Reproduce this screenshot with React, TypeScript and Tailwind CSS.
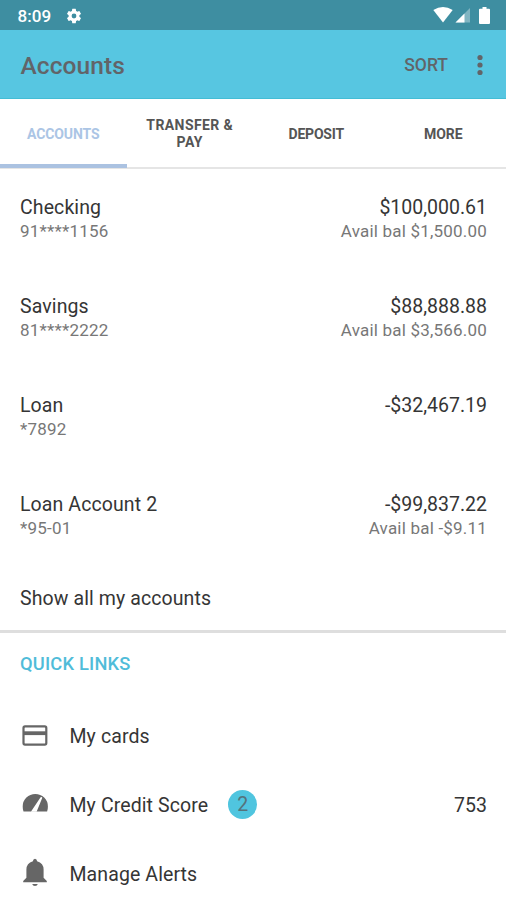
const accounts = [
  { name: "Checking", number: "91****1156", balance: "$100,000.61", available: "Avail bal $1,500.00" },
  { name: "Savings", number: "81****2222", balance: "$88,888.88", available: "Avail bal $3,566.00" },
  { name: "Loan", number: "*7892", balance: "-$32,467.19", available: "" },
  { name: "Loan Account 2", number: "*95-01", balance: "-$99,837.22", available: "Avail bal -$9.11" },
];

function StatusBar() {
  return (
    <div className="flex h-[30px] shrink-0 items-center bg-[#3e8ea1] pl-[17.500px] pr-[16px] text-white">
      <span className="text-[17px] leading-[30px] font-medium tracking-[0.1px] pt-[2px]">8:09</span>
      <svg className="ml-[14px] mt-[1px] size-[18px]" viewBox="0 0 24 24" fill="currentColor">
        <path d="M19.14 12.94c.04-.3.06-.61.06-.94s-.02-.64-.07-.94l2.03-1.58a.49.49 0 0 0 .12-.61l-1.92-3.32a.49.49 0 0 0-.59-.22l-2.39.96a7 7 0 0 0-1.62-.94l-.36-2.54A.48.48 0 0 0 13.920 2.400h-3.840a.47.47 0 0 0-.47.41l-.36 2.540a7.200 7.200 0 0 0-1.620.940l-2.390-.960a.48.48 0 0 0-.590.220L2.740 8.870a.47.47 0 0 0 .120.610l2.030 1.580c-.050.300-.090.630-.090.940s.020.640.070.940l-2.030 1.580a.49.49 0 0 0-.120.610l1.920 3.320c.120.220.370.290.590.220l2.390-.960c.500.380 1.030.700 1.620.940l.360 2.540c.050.240.240.410.480.410h3.840c.240 0 .440-.170.470-.410l.360-2.540a7 7 0 0 0 1.620-.940l2.390.960c.220.080.470 0 .590-.220l1.920-3.320a.47.47 0 0 0-.120-.610zM12 15.200a3.200 3.200 0 1 1 0-6.400 3.200 3.200 0 0 1 0 6.400z" />
      </svg>
      <svg className="ml-auto h-4 w-5" viewBox="0 0 20 16" fill="currentColor">
        <path d="M0.300 3Q10-3 19.700 3L10 15.500z" />
      </svg>
      <svg className="ml-[2px] h-4 w-4" viewBox="0 0 16 16" fill="currentColor">
        <path opacity=".35" d="M15 1v14.500H.500z" />
        <path d="M9.500 6.500v9H.500z" />
      </svg>
      <svg className="ml-2 h-[17px] w-[11px]" viewBox="0 0 11 17" fill="currentColor">
        <path d="M3.500 0h4v1.700H10q1 0 1 1V16q0 1-1 1H1q-1 0-1-1V2.700q0-1 1-1h2.500z" />
      </svg>
    </div>
  );
}

export default function App() {
  return (
    <main className="flex h-[900px] w-[506px] flex-col overflow-hidden bg-white font-['Roboto',sans-serif] text-[#353535]">
      <StatusBar />
      <header className="flex h-[69px] shrink-0 items-center border-b border-[#43bdd5] bg-[#57c6e1] pl-[20.500px] pr-[23px] text-[#626468]">
        <h1 className="text-[24.500px] leading-8 font-medium tracking-[0.1px] pt-[3px]">Accounts</h1>
        <span className="ml-auto text-[17.5px] font-medium leading-6 pt-[2px]">SORT</span>
        <svg className="ml-[29px] mt-[1px] h-[22px] w-[6px]" viewBox="0 0 6 22" fill="currentColor">
          <circle cx="3" cy="3.500" r="2.600" />
          <circle cx="3" cy="11" r="2.600" />
          <circle cx="3" cy="18.500" r="2.600" />
        </svg>
      </header>
      <nav className="grid h-[70px] shrink-0 grid-cols-4 border-b-2 border-[#e5e5e5] text-center text-[14px] leading-[17px] font-bold text-[#555]">
        <div className="-mb-[1px] flex items-center justify-center border-b-4 border-[#abc2e1] pt-[5px] tracking-[-0.1px] text-[#abc5e5]">ACCOUNTS</div>
        <div className="flex items-center justify-center px-4 pt-[2px] tracking-[0.400px]">TRANSFER & PAY</div>
        <div className="flex items-center justify-center pt-[2px] tracking-[-0.2px]">DEPOSIT</div>
        <div className="flex items-center justify-center pt-[2px] pl-px tracking-[-0.1px]">MORE</div>
      </nav>

      <section className="flex shrink-0 flex-col pt-[26px] pl-5 pr-[19px]">
        {accounts.map((a) => (
          <div key={a.number} className="flex h-[99px] justify-between">
            <div>
              <div className="text-[19.500px] leading-[26px] tracking-[0.1px]">{a.name}</div>
              <div className="-mt-[2px] text-[17px] leading-6 tracking-[0.2px] text-[#777]">{a.number}</div>
            </div>
            <div className="text-right">
              <div className="text-[19.500px] leading-[26px]">{a.balance}</div>
              <div className="-mt-[2px] text-[17px] leading-6 tracking-[0.2px] text-[#777]">{a.available}</div>
            </div>
          </div>
        ))}
        <div className="-mt-[5px] h-[44px] text-[19.500px] leading-[26px] tracking-[0.1px]">Show all my accounts</div>
      </section>

      <section className="shrink-0 border-t-[3px] border-[#dedede] pl-5 pr-[19px]">
        <h2 className="h-[68px] pt-[18px] text-[18.300px] leading-[26px] tracking-[0.200px] text-[#50bcd9] font-medium">QUICK LINKS</h2>
        <div className="flex h-[69px] items-center text-[19.500px] leading-[26px] tracking-[0.1px]">
          <svg className="mr-[20.500px] h-[30px] w-[29px] text-[#666]" viewBox="0 0 29 30" fill="none" stroke="currentColor">
            <rect x="3.500" y="5.400" width="22.800" height="18.200" rx="1.500" strokeWidth="2.200" />
            <path d="M3.500 12.200h22.800" strokeWidth="3.800" />
          </svg>
          <span className="pt-[2px]">My cards</span>
        </div>
        <div className="flex h-[69px] items-center text-[19.500px] leading-[26px] tracking-[0.1px]">
          <svg className="mr-[20.500px] h-[30px] w-[29px]" viewBox="0 0 29 30">
            <path d="M3.500 21.500Q2.700 19.500 2.700 16.500a12.600 12.600 0 0 1 25.200 0q0 3-.8 5z" fill="#666" />
            <path d="M22.300 7.800L16.600 21.700h-5.700L20.600 7.300q1.200-.8 1.700.5z" fill="white" />
          </svg>
          <span className="pt-[2px]">My Credit Score</span>
          <span className="ml-5 -mt-px flex size-[29px] items-center justify-center rounded-full bg-[#50c5df] pt-[2px] text-[#55737b]">2</span>
          <span className="ml-auto tracking-normal pt-[2px]">753</span>
        </div>
        <div className="flex h-[69px] items-center text-[19.500px] leading-[26px] tracking-[0.1px]">
          <svg className="mr-[20.500px] -mt-[3px] h-[30px] w-[29px] text-[#666]" viewBox="0 0 29 30" fill="currentColor">
            <path d="M15 1.700q1.900 0 2.100 2.500Q23.600 6 23.600 12.600v8.200l3.200 3.200v1.300H3.200V24l3.200-3.200v-8.200Q6.400 6 12.900 4.200q.2-2.500 2.100-2.500zM12.200 27h5.600q-.5 1.900-2.800 1.900T12.200 27z" />
          </svg>
          <span className="pt-[2px]">Manage Alerts</span>
        </div>
      </section>
    </main>
  );
}
